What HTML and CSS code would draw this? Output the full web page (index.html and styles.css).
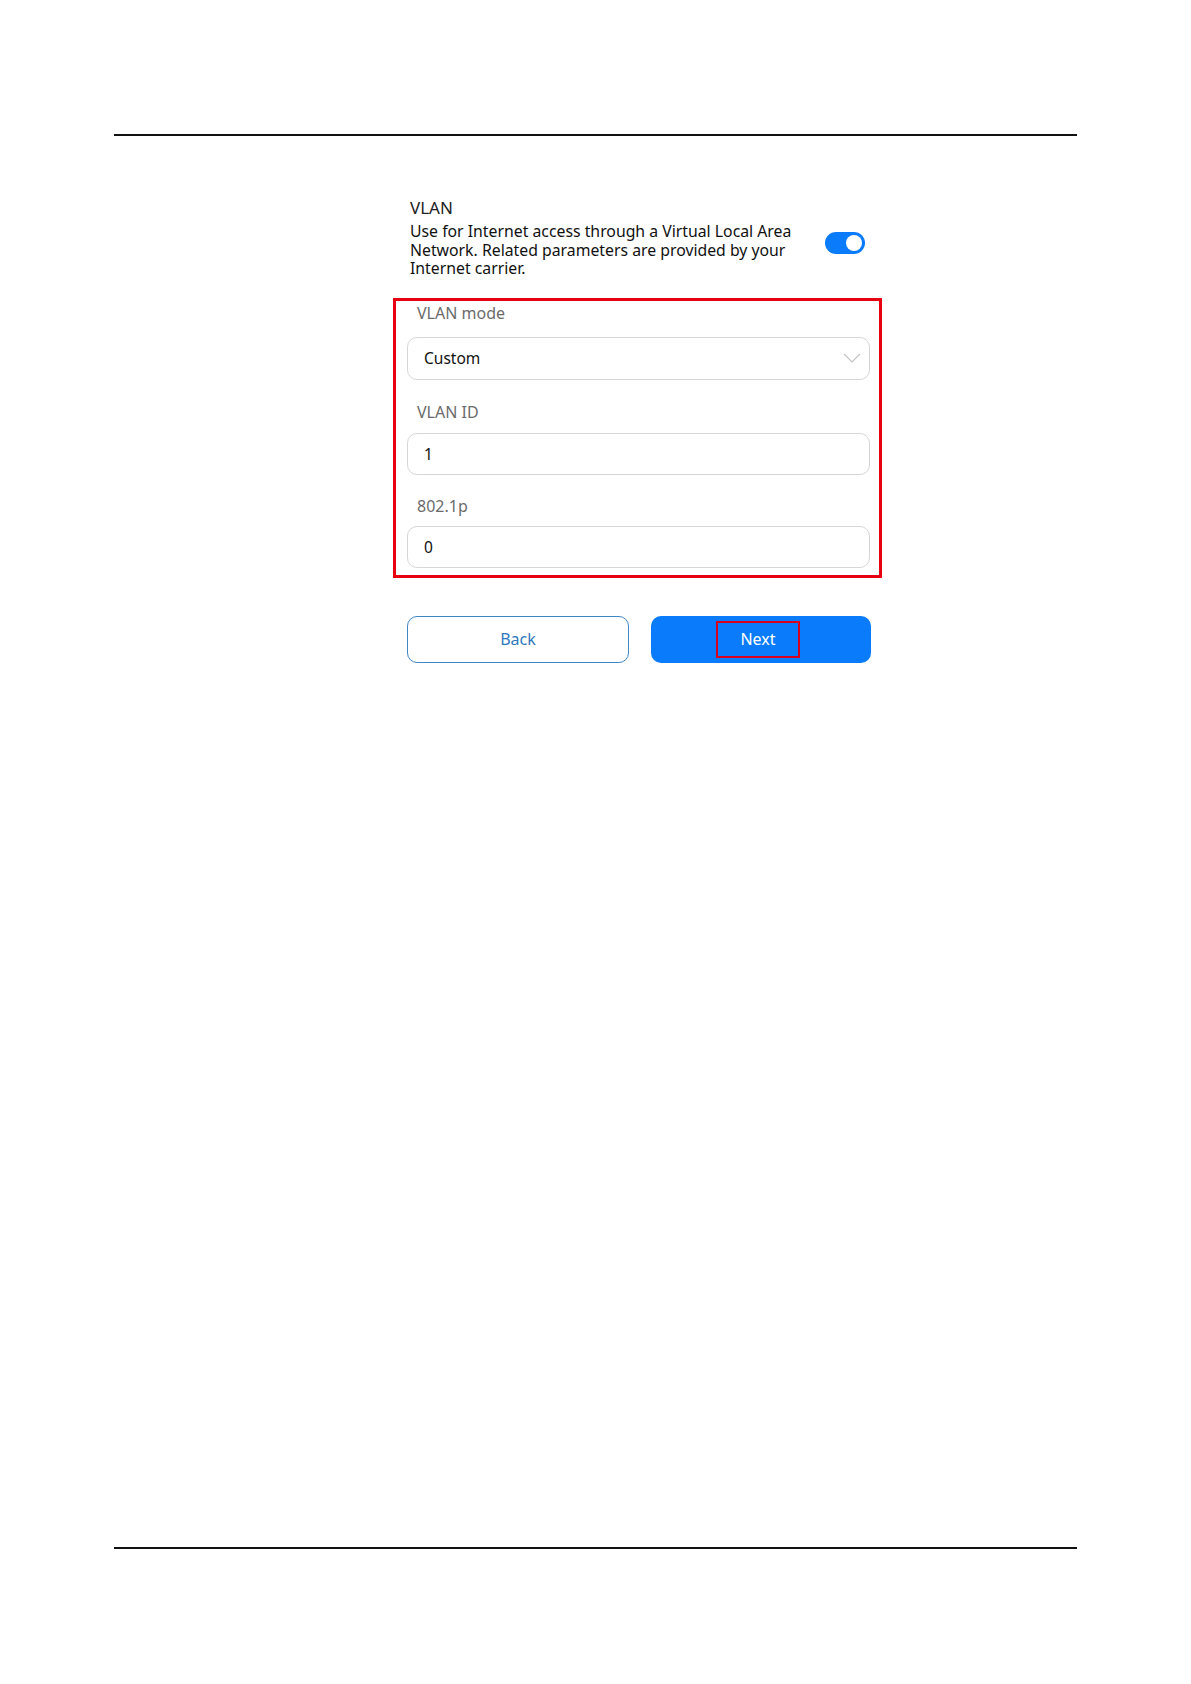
FILE: index.html
```html
<!DOCTYPE html>
<html lang="en">

<head>
    <meta charset="UTF-8">
    <meta name="viewport" content="width=device-width, initial-scale=1.0">
    <title>VLAN</title>
    <link rel="stylesheet" href="styles.css">
</head>

<body>
    <div class="rule top"></div>

    <div id="panel">
        <div class="vlan-head">
            <div class="title">VLAN</div>
            <div class="row">
                <p class="desc">Use for Internet access through a Virtual Local Area Network. Related parameters are provided by your Internet carrier.</p>
                <span class="switch on"><i></i></span>
            </div>
        </div>

        <div class="mark-box">
            <div class="label first">VLAN mode</div>
            <div class="field select">
                <span>Custom</span>
                <svg class="arrow" width="18" height="10" viewBox="0 0 18 10">
                    <path d="M1 1 L9 9 L17 1" fill="none" stroke="#c4c4c4" stroke-width="1.2" />
                </svg>
            </div>

            <div class="label">VLAN ID</div>
            <div class="field"><span>1</span></div>

            <div class="label last">802.1p</div>
            <div class="field"><span>0</span></div>
        </div>

        <div class="btns">
            <div class="btn back">Back</div>
            <div class="btn next"><span class="mark">Next</span></div>
        </div>
    </div>

    <div class="rule bottom"></div>
</body>

</html>
```

FILE: styles.css
```css
* {
    margin: 0;
    padding: 0;
    box-sizing: border-box;
}

body {
    background: #fff;
    font-family: "Noto Sans", "Open Sans", sans-serif;
    color: #1a1a1a;
    width: 1191px;
    height: 1684px;
}

.rule {
    margin: 0 114px;
    border-top: 2px solid #111;
}

.rule.top {
    margin-top: 134px;
}

.rule.bottom {
    margin-top: 884px;
}

#panel {
    width: 464px;
    margin-left: 407px;
    padding-top: 61px;
}

.vlan-head {
    padding-left: 3px;
}

.title {
    font-size: 17px;
    line-height: 22px;
    color: #222;
    margin-bottom: 3px;
}

.row {
    display: flex;
    align-items: flex-start;
    justify-content: space-between;
}

.desc {
    width: 392px;
    font-size: 15.8px;
    line-height: 18.5px;
    color: #111;
}

.switch {
    display: block;
    width: 40px;
    height: 22px;
    border-radius: 11px;
    background: #0a7cfb;
    margin: 10px 6px 0 0;
    position: relative;
}

.switch i {
    position: absolute;
    right: 3px;
    top: 3px;
    width: 16px;
    height: 16px;
    border-radius: 50%;
    background: #fff;
}

.mark-box {
    width: 489px;
    margin: 20px 0 0 -14px;
    border: 3px solid #e60012;
    padding: 2px 9px 7px 11px;
}

.label {
    font-size: 16px;
    line-height: 20px;
    color: #6b6b6b;
    padding-left: 10px;
    margin: 22px 0 11px;
}

.label.first {
    margin: 0 0 14px;
}

.label.last {
    margin: 21px 0 10px;
}

.field {
    height: 42px;
    border: 1px solid #d6d6d6;
    border-radius: 10px;
    display: flex;
    align-items: center;
    justify-content: space-between;
    padding: 0 8px 0 16px;
    font-size: 15.5px;
    color: #111;
}

.field.select {
    height: 43px;
}

.btns {
    display: flex;
    justify-content: space-between;
    margin-top: 38px;
}

.btn {
    height: 47px;
    border-radius: 10px;
    display: flex;
    align-items: center;
    justify-content: center;
    font-size: 16px;
}

.back {
    width: 222px;
    border: 1px solid #3f86c6;
    color: #2f78c0;
}

.next {
    width: 220px;
    background: #0a7cfb;
    color: #fff;
}

.next .mark {
    display: flex;
    align-items: center;
    justify-content: center;
    width: 84px;
    height: 37px;
    border: 2px solid #d7001f;
    margin-left: -6px;
}
```
